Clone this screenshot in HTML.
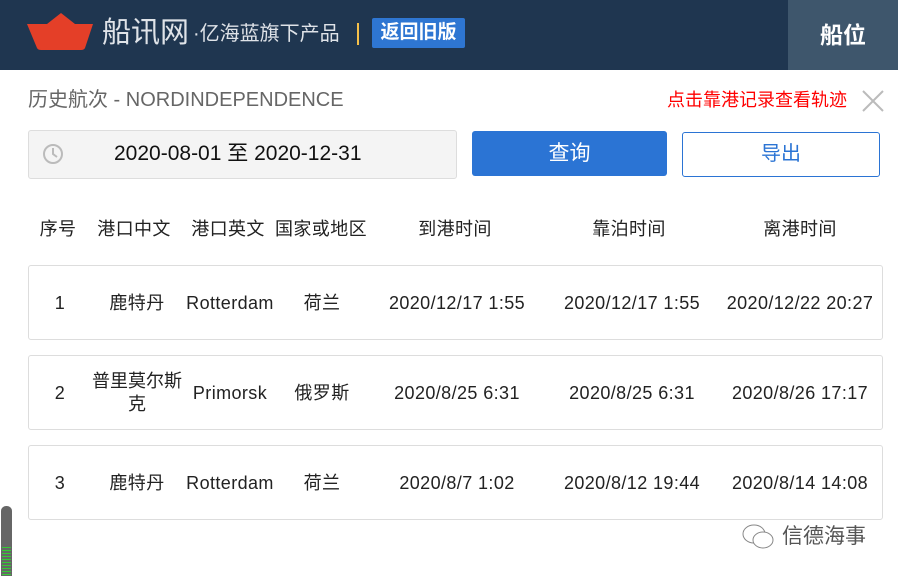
<!DOCTYPE html><html><head><meta charset="utf-8"><style>
body{margin:0;width:898px;height:576px;overflow:hidden;background:#fff;font-family:"Liberation Sans","Noto Sans CJK SC",sans-serif;position:relative}
.a{position:absolute}
.hdr{left:0;top:0;width:898px;height:70px;background:#1f3650}
.c{position:absolute;transform:translateX(-50%);white-space:nowrap;font-size:18px;letter-spacing:0.4px;color:#222;text-align:center;line-height:24px;height:24px}
.card{position:absolute;left:28px;width:853px;border:1px solid #ddd;border-radius:3px}
</style></head><body>
<div class="a hdr"></div>
<svg class="a" style="left:27px;top:12px" width="68" height="40"><path d="M0 12 L20 12 L34 1 L48 12 L66 12 L58 36 Q57 38 54 38 L14 38 Q11 38 10 36 Z" fill="#e43f28"/></svg>
<div class="a" style="left:102px;top:14px;font-size:29px;color:#dfe3e8;line-height:38px">船讯网</div>
<div class="a" style="left:193px;top:20px;font-size:20px;color:#dfe3e8;line-height:28px">·亿海蓝旗下产品</div>
<div class="a" style="left:357px;top:23px;width:2px;height:22px;background:#f5c04a"></div>
<div class="a" style="left:372px;top:18px;width:93px;height:30px;background:#2e76d2;border-radius:2px;color:#fff;font-size:19px;font-weight:bold;line-height:30px;text-align:center">返回旧版</div>
<div class="a" style="left:788px;top:0;width:110px;height:70px;background:#3e566c;color:#fff;font-size:23px;font-weight:bold;line-height:70px;text-align:center">船位</div>
<div class="a" style="left:28px;top:87px;font-size:20px;color:#666;line-height:26px">历史航次 - NORDINDEPENDENCE</div>
<div class="a" style="left:667px;top:88px;font-size:18px;color:#f00;line-height:24px">点击靠港记录查看轨迹</div>
<svg class="a" style="left:861px;top:89px" width="24" height="24"><path d="M2 2L22 22M22 2L2 22" stroke="#bbb" stroke-width="2"/></svg>
<div class="a" style="left:28px;top:130px;width:427px;height:47px;background:#f4f4f4;border:1px solid #ddd;border-radius:3px"></div>
<svg class="a" style="left:42px;top:143px" width="22" height="22"><circle cx="11" cy="11" r="9" fill="none" stroke="#bbb" stroke-width="2"/><path d="M11 5V11L15 14" stroke="#bbb" stroke-width="2" fill="none"/></svg>
<div class="a" style="left:114px;top:140px;font-size:21px;color:#111;line-height:28px">2020-08-01 至 2020-12-31</div>
<div class="a" style="left:472px;top:131px;width:195px;height:45px;background:#2b74d4;border-radius:3px;color:#fff;font-size:21px;line-height:45px;text-align:center">查询</div>
<div class="a" style="left:682px;top:132px;width:196px;height:43px;border:1px solid #2b74d4;border-radius:3px;color:#2b74d4;font-size:20px;line-height:43px;text-align:center">导出</div>
<div class="c" style="left:58px;top:217px">序号</div>
<div class="c" style="left:134px;top:217px">港口中文</div>
<div class="c" style="left:228px;top:217px">港口英文</div>
<div class="c" style="left:321px;top:217px">国家或地区</div>
<div class="c" style="left:455px;top:217px">到港时间</div>
<div class="c" style="left:629px;top:217px">靠泊时间</div>
<div class="c" style="left:800px;top:217px">离港时间</div>
<div class="card" style="top:265px;height:73px"></div>
<div class="card" style="top:355px;height:73px"></div>
<div class="card" style="top:445px;height:73px"></div>
<div class="c" style="left:60px;top:291px">1</div><div class="c" style="left:137px;top:291px">鹿特丹</div><div class="c" style="left:230px;top:291px">Rotterdam</div><div class="c" style="left:322px;top:291px">荷兰</div><div class="c" style="left:457px;top:291px">2020/12/17 1:55</div><div class="c" style="left:632px;top:291px">2020/12/17 1:55</div><div class="c" style="left:800px;top:291px">2020/12/22 20:27</div>
<div class="c" style="left:60px;top:381px">2</div><div class="c" style="left:137px;top:370px;line-height:23px;height:46px;letter-spacing:0">普里莫尔斯<br>克</div><div class="c" style="left:230px;top:381px">Primorsk</div><div class="c" style="left:322px;top:381px">俄罗斯</div><div class="c" style="left:457px;top:381px">2020/8/25 6:31</div><div class="c" style="left:632px;top:381px">2020/8/25 6:31</div><div class="c" style="left:800px;top:381px">2020/8/26 17:17</div>
<div class="c" style="left:60px;top:471px">3</div><div class="c" style="left:137px;top:471px">鹿特丹</div><div class="c" style="left:230px;top:471px">Rotterdam</div><div class="c" style="left:322px;top:471px">荷兰</div><div class="c" style="left:457px;top:471px">2020/8/7 1:02</div><div class="c" style="left:632px;top:471px">2020/8/12 19:44</div><div class="c" style="left:800px;top:471px">2020/8/14 14:08</div>
<div class="a" style="left:1px;top:506px;width:11px;height:70px;background:#666;border-radius:5px 5px 0 0"></div>
<div class="a" style="left:2px;top:547px;width:9px;height:29px;background:repeating-linear-gradient(#3c3 0 1px,#666 1px 3px)"></div>
<svg class="a" style="left:740px;top:522px" width="36" height="30"><ellipse cx="14" cy="12" rx="11" ry="9" fill="none" stroke="#888"/><ellipse cx="23" cy="18" rx="10" ry="8" fill="#fff" stroke="#888"/></svg>
<div class="a" style="left:782px;top:523px;font-size:21px;color:#555;line-height:28px">信德海事</div>
</body></html>
